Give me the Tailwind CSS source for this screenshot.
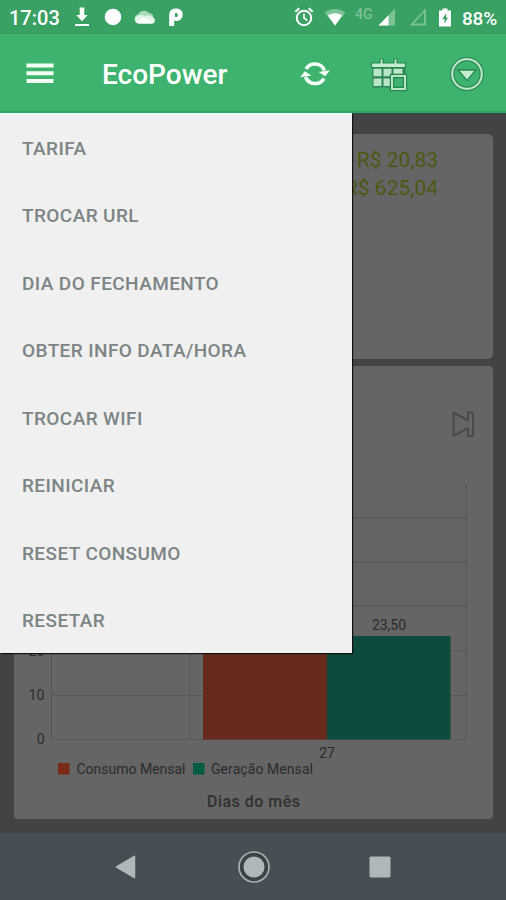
<!DOCTYPE html>
<html lang="pt-BR">
<head>
<meta charset="utf-8">
<title>EcoPower</title>
<script src="https://cdn.jsdelivr.net/npm/@tailwindcss/browser@4"></script>
</head>
<body class="w-[506px] h-[900px] overflow-hidden flex flex-col font-[Roboto,sans-serif] bg-[#434343]">

<!-- Status bar -->
<header class="h-[34px] shrink-0 bg-[#38a163] flex items-center justify-between pl-[9px] pr-[7px] text-white">
  <div class="flex items-center">
    <span class="w-[65px] text-[20px] leading-none font-medium pt-[2px]">17:03</span>
    <svg class="w-[16px] h-[20px]" viewBox="0 0 16 20" fill="#fff"><path d="M5.700 0.500h4.600v7.500h3.400L8 14.300 2.300 8h3.400zM1 17h14v2H1z"/></svg>
    <svg class="w-[18px] h-[18px] ml-[14px]" viewBox="0 0 18 18"><circle cx="9" cy="9" r="8.300" fill="#fff"/></svg>
    <svg class="w-[22px] h-[16px] ml-[12px]" viewBox="0 0 22 16"><path d="M5 14.500a4.500 4.500 0 0 1-.8-8.900C5.500 1.500 12 .5 15 4c3 .3 4.500 2 4.500 4.500z" fill="#a8dabb"/><path d="M4.800 14.500a4 4 0 0 1-.5-7.900C7 5.500 9 6 11 7.500 13 6 16 5.700 18 8c4 .7 4 6.200.2 6.500z" fill="#e0f4e7"/><path d="M2 12.500 10 8.500 20 13.500 18.200 14.500H4.800z" fill="#fff"/></svg>
    <svg class="w-[16px] h-[20px] ml-[12px]" viewBox="0 0 16 20"><path d="M1.200 19V8C1.200 3.500 4.300 1.500 8 1.500c4 0 6.700 2.400 6.700 6 0 3.700-2.800 6.500-6.400 6.500-1 0-1.500-.1-2.100-.4V19zM7 6.200v3.600c2 .6 2.800-.4 2.800-1.900S9 5.700 7 6.200z" fill="#fff" fill-rule="evenodd"/></svg>
  </div>
  <div class="flex items-center">
    <svg class="w-[20px] h-[20px]" viewBox="0 0 20 20" fill="none" stroke="#fff" stroke-width="2"><circle cx="10" cy="11" r="7.200"/><path d="M10 6.500V11l3.300 2.500" stroke-width="1.600"/><path d="M1.300 4.700 5.300 1.300M18.700 4.700 14.700 1.300"/></svg>
    <svg class="w-[22px] h-[18px] ml-[10px]" viewBox="0 0 22 18"><path d="M.5 4.500C6.500-.2 15.500-.2 21.500 4.500L11 17.500z" fill="#7bc297"/><path d="M3.800 7.500C8.500 4.500 13.500 4.500 18.200 7.500L11 17.500z" fill="#fff"/></svg>
    <span class="ml-[9px] mb-[6px] w-[21px] text-[14px] leading-none text-[#7bc297] font-medium whitespace-nowrap">4G</span>
    <svg class="w-[18px] h-[18px] ml-[2px]" viewBox="0 0 18 18"><path d="M.5 17.500 17 .5v17z" fill="#7bc297"/><path d="M.5 17.500 10.500 7.200v10.300z" fill="#fff"/></svg>
    <svg class="w-[18px] h-[18px] ml-[13px]" viewBox="0 0 18 18"><path d="M2.500 16.500 16 2.500v14z" fill="none" stroke="#7bc297" stroke-width="1.800"/></svg>
    <svg class="w-[12px] h-[19px] ml-[12px]" viewBox="0 0 12 19"><path d="M3.500.5h5v2H12V18.500H0v-16h3.500z" fill="#fff"/><path d="M7.500 5 3.300 11h2.200v4.500L9 9.500H7z" fill="#38a163"/></svg>
    <span class="ml-[11px] w-[37px] text-[19px] tracking-[-0.2px] leading-none font-medium pt-[2px] whitespace-nowrap">88%</span>
  </div>
</header>

<!-- App bar -->
<div class="h-[79px] shrink-0 bg-[#3eb370] border-b-2 border-[#27a967] flex items-center pl-[26px] pr-[20px]">
  <svg class="w-[28px] h-[20px]" viewBox="0 0 28 20" fill="#f2fff6"><path d="M.5 .5h27v4h-27zM.5 8.200h27v4h-27zM.5 15.900h27v4h-27z"/></svg>
  <h1 class="ml-[48px] w-[198px] text-[28px] leading-none font-medium text-white pt-[5px]">EcoPower</h1>
  <svg class="w-[30px] h-[26px] mt-[2px]" viewBox="0 0 30 26"><path d="M6 8A10.300 10.300 0 0 1 24.500 9.500M24 17.500A10.300 10.300 0 0 1 5.500 16" fill="none" stroke="#f5fff8" stroke-width="3.500"/><path d="M18.500 11 29.800 9.200 25.300 15.200zM.2 16.300 4.700 10.300 11.500 14.500z" fill="#f5fff8"/></svg>
  <svg class="w-[38px] h-[36px] ml-[40px] mt-[2px]" viewBox="0 0 38 36"><path d="M2.500 11h33v20.500h-33z" fill="#2b8653"/><path d="M10 3.500q1.500-2 3 0V7h11V3.500q1.500-2 3 0V7h8.500v4.500H1.500V7H10z" fill="#c5eccf" stroke="#258650" stroke-width="1.200"/><path d="M3.500 12.700h8v7.500h-8zM13.500 12.700h8v7.500h-8zM23.500 12.700h9v7.500h-9zM3.500 22.500h8v7.500h-8zM13.500 22.500h8v7.500h-8z" fill="#b9e6c6"/><path d="M22 20h13v13H22z" fill="#3eb370" stroke="#258650" stroke-width="4.400"/><path d="M22 20h13v13H22z" fill="none" stroke="#b9e6c6" stroke-width="2"/></svg>
  <svg class="w-[36px] h-[36px] ml-[41px] mt-[2px]" viewBox="0 0 36 36"><circle cx="18" cy="18" r="14.800" fill="none" stroke="#268552" stroke-width="4.400"/><circle cx="18" cy="18" r="14.800" fill="none" stroke="#b9e6c6" stroke-width="2.200"/><path d="M9 14h18l-9 10.500z" fill="#c5eccf" stroke="#268552" stroke-width="1.300"/></svg>
</div>

<!-- Dashboard behind the drawer -->
<main class="relative h-[720px] shrink-0 bg-[#434343] pt-[21px] pl-[14px] pr-[13px] flex flex-col gap-[7px]">
  <section class="h-[225px] rounded-[5px] bg-[#656565] pt-[12px] pr-[55px] text-right text-[21px] leading-[28px] text-[#4c5913]">
    <p>R$ 20,83</p>
    <p>R$ 625,04</p>
  </section>
  <section class="h-[453px] rounded-[4px] bg-[#656565]">
    <svg class="w-[479px] h-[453px]" viewBox="14 366 479 453" font-size="14" fill="#2b2b2b">
      <path d="M453.500 412.500v23.500l14.500-8v8h5v-23.500h-5v8z" fill="none" stroke="#4b4b4b" stroke-width="2" stroke-linejoin="round"/>
      <path d="M51 518H466M51 562H466M51 606H466M51 651H466M51 695.500H466M51 739.500H466" stroke="#595959" stroke-width="1.200"/>
      <path d="M51.500 483V739.500M190 483V739.500M466 483V739.500" stroke="#595959" stroke-width="1.200"/>
      <rect x="203" y="640" width="124" height="99.500" fill="#66291c"/>
      <rect x="327" y="636" width="123.500" height="103.500" fill="#0c4b3d"/>
      <text x="389" y="629.500" text-anchor="middle">23,50</text>
      <text x="44.500" y="656" text-anchor="end">20</text>
      <text x="44.500" y="700" text-anchor="end">10</text>
      <text x="44.500" y="744" text-anchor="end">0</text>
      <text x="327" y="758" text-anchor="middle">27</text>
      <rect x="58" y="763" width="11.500" height="11.500" fill="#7a2a16"/>
      <text x="76.500" y="774" textLength="109" font-size="14">Consumo Mensal</text>
      <rect x="193" y="763" width="11.500" height="11.500" fill="#045c44"/>
      <text x="211" y="774" textLength="102" font-size="14">Geração Mensal</text>
      <text x="253.500" y="807" text-anchor="middle" font-size="16" font-weight="500" textLength="93" fill="#303030">Dias do mês</text>
    </svg>
  </section>

  <!-- Drawer menu overlays the dashboard -->
  <nav class="absolute left-0 top-0 w-[352px] h-[540px] bg-[#f0f0f0] flex flex-col pl-[22px] pt-[2px] text-[19px] tracking-[0.4px] font-medium text-[#7c8585] shadow-[1px_1px_1px_#111]">
    <a class="h-[67.5px] shrink-0 flex items-center">TARIFA</a>
    <a class="h-[67.5px] shrink-0 flex items-center">TROCAR URL</a>
    <a class="h-[67.5px] shrink-0 flex items-center">DIA DO FECHAMENTO</a>
    <a class="h-[67.5px] shrink-0 flex items-center">OBTER INFO DATA/HORA</a>
    <a class="h-[67.5px] shrink-0 flex items-center">TROCAR WIFI</a>
    <a class="h-[67.5px] shrink-0 flex items-center">REINICIAR</a>
    <a class="h-[67.5px] shrink-0 flex items-center">RESET CONSUMO</a>
    <a class="h-[67.5px] shrink-0 flex items-center">RESETAR</a>
  </nav>
</main>

<!-- System navigation -->
<footer class="h-[67px] shrink-0 bg-[#464f54] flex items-center justify-between pl-[114px] pr-[114px]">
  <svg class="w-[24px] h-[26px]" viewBox="0 0 24 26"><path d="M2.500 13 20.500 2.500v21z" fill="#b0b7b9" stroke="#b0b7b9" stroke-width="1.500" stroke-linejoin="round"/></svg>
  <svg class="w-[34px] h-[34px] ml-[1px]" viewBox="0 0 34 34"><circle cx="17" cy="17" r="15" fill="#3b4347" stroke="#a8afb1" stroke-width="1.700"/><circle cx="17" cy="17" r="10.500" fill="#b0b7b9"/></svg>
  <svg class="w-[24px] h-[24px]" viewBox="0 0 24 24"><rect x="1.500" y="1.500" width="21" height="21" rx="1.500" fill="#b0b7b9"/></svg>
</footer>
</body>
</html>
